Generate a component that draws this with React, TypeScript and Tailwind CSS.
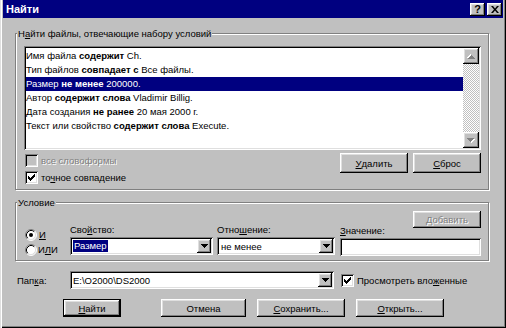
import React from "react";

// Win98-style bevels
const raised =
  "shadow-[inset_-1px_-1px_0_#000,inset_1px_1px_0_#fff,inset_-2px_-2px_0_#808080,inset_2px_2px_0_#dfdfdf]";
const sunken =
  "shadow-[inset_1px_1px_0_#808080,inset_-1px_-1px_0_#fff,inset_2px_2px_0_#000,inset_-2px_-2px_0_#dfdfdf]";
const etched = "border border-[#808080] shadow-[1px_1px_0_#fff,inset_1px_1px_0_#fff]";

const CHECK = [
  "......x",
  ".....xx",
  "x...xxx",
  "xx.xxx.",
  "xxxxx..",
  ".xxx...",
  "..x....",
];

function CheckMark() {
  return (
    <svg width="7" height="7" viewBox="0 0 7 7" className="block">
      {CHECK.flatMap((row, y) =>
        row.split("").map((c, x) =>
          c === "x" ? <rect key={`${x}-${y}`} x={x} y={y} width="1" height="1" fill="#000" /> : null
        )
      )}
    </svg>
  );
}

function CheckBox({ checked, disabled }: { checked?: boolean; disabled?: boolean }) {
  return (
    <div
      className={`w-[13px] h-[13px] shrink-0 flex items-center justify-center ${sunken} ${
        disabled ? "bg-[#c0c0c0]" : "bg-white"
      }`}
    >
      {checked && <CheckMark />}
    </div>
  );
}

function Radio({ checked }: { checked?: boolean }) {
  return (
    <svg width="12" height="12" viewBox="0 0 12 12" className="block shrink-0">
      <circle cx="6" cy="6" r="5" fill="#fff" />
      <path d="M2.11 9.89 A5.5 5.5 0 0 1 9.89 2.11" fill="none" stroke="#808080" />
      <path d="M9.89 2.11 A5.5 5.5 0 0 1 2.11 9.89" fill="none" stroke="#fff" />
      <path d="M2.82 9.18 A4.5 4.5 0 0 1 9.18 2.82" fill="none" stroke="#000" />
      <path d="M9.18 2.82 A4.5 4.5 0 0 1 2.82 9.18" fill="none" stroke="#dfdfdf" />
      {checked && <circle cx="6" cy="6" r="2" fill="#000" />}
    </svg>
  );
}

function DownArrow({ color = "#000" }: { color?: string }) {
  return (
    <svg width="7" height="4" viewBox="0 0 7 4" className="block">
      <path d="M0 0h7v1h-1v1h-1v1h-1v1h-1v-1h-1v-1h-1v-1h-1z" fill={color} />
    </svg>
  );
}

function GreyArrow({ up }: { up?: boolean }) {
  return (
    <svg width="8" height="5" viewBox="0 0 8 5" className={`block ${up ? "rotate-180" : ""}`}>
      <path d="M1 1h7v1h-1v1h-1v1h-1v1h-1v-1h-1v-1h-1v-1h-1z" fill="#fff" />
      <path d="M0 0h7v1h-1v1h-1v1h-1v1h-1v-1h-1v-1h-1v-1h-1z" fill="#808080" />
    </svg>
  );
}

function Button({
  children,
  className = "",
  disabled,
  isDefault,
}: {
  children: React.ReactNode;
  className?: string;
  disabled?: boolean;
  isDefault?: boolean;
}) {
  const inner = (
    <div
      className={`h-full w-full flex items-center justify-center bg-[#c0c0c0] ${raised} ${
        disabled ? "text-[#808080] [text-shadow:1px_1px_0_#fff]" : ""
      }`}
    >
      {children}
    </div>
  );
  if (isDefault) return <div className={`border border-black ${className}`}>{inner}</div>;
  return <div className={className}>{inner}</div>;
}

function Combo({ className = "", children }: { className?: string; children?: React.ReactNode }) {
  return (
    <div className={`flex h-[18px] bg-white p-[2px] ${sunken} ${className}`}>
      <div className="flex-1 flex items-center pl-[1px] overflow-hidden whitespace-nowrap">{children}</div>
      <div className={`w-[14px] h-full flex items-center justify-center bg-[#c0c0c0] ${raised}`}>
        <DownArrow />
      </div>
    </div>
  );
}

const rows: [string, string, string][] = [
  ["Имя файла ", "содержит", " Ch."],
  ["Тип файлов ", "совпадает с", " Все файлы."],
  ["Размер ", "не менее", " 200000."],
  ["Автор ", "содержит слова", " Vladimir Billig."],
  ["Дата создания ", "не ранее", " 20 мая 2000 г."],
  ["Текст или свойство ", "содержит слова", " Execute."],
];

export default function App() {
  return (
    <div className="w-[506px] h-[328px] bg-[#c0c0c0] flex flex-col overflow-hidden font-['Liberation_Sans',Arial,sans-serif] text-[9.5px] leading-[13px] text-black shadow-[inset_1px_0_0_#dfdfdf,inset_2px_0_0_#fff,inset_-1px_-1px_0_#000,inset_-2px_-2px_0_#808080]">
      {/* title bar */}
      <div className="ml-[3px] mr-[3px] h-[18px] shrink-0 bg-[#000080] flex items-center justify-between pl-[3px] pr-[1px]">
        <span className="text-white font-bold text-[11px]">Найти</span>
        <div className="flex gap-[2px]">
          <div className={`w-[15px] h-[13px] bg-[#c0c0c0] flex items-center justify-center font-bold text-[11px] leading-none ${raised}`}>
            ?
          </div>
          <div className={`w-[15px] h-[13px] bg-[#c0c0c0] flex items-center justify-center ${raised}`}>
            <svg width="8" height="7" viewBox="0 0 8 7" className="block">
              <path d="M0 0h2l2 2.5 2-2.5h2l-3 3.5 3 3.5h-2l-2-2.5-2 2.5h-2l3-3.5z" fill="#000" />
            </svg>
          </div>
        </div>
      </div>

      {/* criteria group */}
      <div className={`relative ml-[15px] mt-[15px] w-[474px] h-[157px] shrink-0 pt-[12px] pl-[8px] pr-[7px] ${etched}`}>
        <span className="absolute -top-[7px] left-[1px] px-[1px] bg-[#c0c0c0] whitespace-nowrap">
          Н<span className="underline">а</span>йти файлы, отвечающие набору условий
        </span>

        <div className={`flex h-[104px] bg-white p-[2px] ${sunken}`}>
          <div className="flex-1 pt-[1px]">
            {rows.map((r, i) => (
              <div
                key={i}
                className={`h-[14px] leading-[14px] whitespace-nowrap ${
                  i === 2 ? "bg-[#000080] text-white" : ""
                }`}
              >
                {r[0]}
                <b>{r[1]}</b>
                {r[2]}
              </div>
            ))}
          </div>
          <div className="w-[16px] flex flex-col">
            <div className={`h-[16px] bg-[#c0c0c0] flex items-center justify-center ${raised}`}>
              <GreyArrow up />
            </div>
            <div className="flex-1 bg-[repeating-conic-gradient(#c0c0c0_0_25%,#fff_0_50%)] bg-[length:2px_2px]" />
            <div className={`h-[16px] bg-[#c0c0c0] flex items-center justify-center ${raised}`}>
              <GreyArrow />
            </div>
          </div>
        </div>

        <div className="flex justify-between mt-[3px]">
          <div className="flex flex-col gap-[4px] mt-[1px] pl-[1px]">
            <div className="flex items-center gap-[3px] h-[13px]">
              <CheckBox disabled />
              <span className="text-[#808080] [text-shadow:1px_1px_0_#fff]">все словоформы</span>
            </div>
            <div className="flex items-center gap-[3px] h-[13px]">
              <CheckBox checked />
              <span>
                то<span className="underline">ч</span>ное совпадение
              </span>
            </div>
          </div>
          <div className="flex gap-[5px]">
            <Button className="w-[68px] h-[20px]">
              <span className="underline">У</span>далить
            </Button>
            <Button className="w-[68px] h-[20px]">
              <span className="underline">С</span>брос
            </Button>
          </div>
        </div>
      </div>

      {/* condition group */}
      <div className={`relative ml-[15px] mt-[12px] w-[474px] h-[59px] shrink-0 flex items-start pl-[9px] pr-[7px] ${etched}`}>
        <span className="absolute -top-[7px] left-[1px] px-[1px] bg-[#c0c0c0]">Условие</span>

        <div className="w-[45px] mt-[24px] flex flex-col">
          <div className="h-[15px] flex items-center gap-[2px]">
            <Radio checked />
            <span className="underline">И</span>
          </div>
          <div className="h-[15px] flex items-center gap-[1px]">
            <Radio />
            <span>
              И<span className="underline">Л</span>И
            </span>
          </div>
        </div>

        <div className="w-[143px] mt-[20px] flex flex-col">
          <div className="h-[13px] mb-[1px]">
            Сво<span className="underline">й</span>ство:
          </div>
          <Combo>
            <span className="bg-[#000080] text-white px-[1px] leading-[12px]">Размер</span>
          </Combo>
        </div>

        <div className="w-[118px] ml-[4px] mt-[20px] flex flex-col">
          <div className="h-[13px] mb-[1px]">
            Отно<span className="underline">ш</span>ение:
          </div>
          <Combo>
            <span className="px-[1px]">не менее</span>
          </Combo>
        </div>

        <div className="w-[141px] ml-[5px] mt-[8px] flex flex-col">
          <Button disabled className="w-[68px] h-[17px] self-end">
            <span className="underline">Д</span>обавить
          </Button>
          <div className="h-[13px] mb-[1px] -mt-[4px]">
            <span className="underline">З</span>начение:
          </div>
          <div className={`h-[18px] bg-white ${sunken}`} />
        </div>
      </div>

      {/* folder */}
      <div className="ml-[17px] mt-[10px] h-[18px] shrink-0 flex items-center">
        <div className="w-[53px]">
          Пап<span className="underline">к</span>а:
        </div>
        <Combo className="w-[264px]">
          <span>E:\O2000\DS2000</span>
        </Combo>
        <div className="ml-[7px] flex items-center gap-[3px]">
          <CheckBox checked />
          <span>
            Просмотреть вло<span className="underline">ж</span>енные
          </span>
        </div>
      </div>

      {/* buttons */}
      <div className="ml-[63px] mt-[10px] h-[18px] shrink-0 flex">
        <Button isDefault className="w-[58px] h-[18px]">
          <span className="underline">Н</span>айти
        </Button>
        <Button className="w-[85px] h-[18px] ml-[40px]">Отмена</Button>
        <Button className="w-[88px] h-[18px] ml-[11px]">
          <span className="underline">С</span>охранить...
        </Button>
        <Button className="w-[88px] h-[18px] ml-[11px]">
          <span className="underline">О</span>ткрыть...
        </Button>
      </div>
    </div>
  );
}
